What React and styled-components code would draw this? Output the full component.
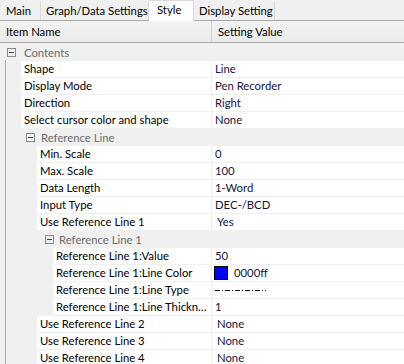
import React from 'react';
import styled, { createGlobalStyle } from 'styled-components';

const GlobalStyle = createGlobalStyle`
  html, body {
    margin: 0;
    padding: 0;
    background: #f0f0f0;
  }
  body {
    font-family: Lato, "Noto Sans", sans-serif;
    font-size: 11.3px;
    color: #000;
    overflow: hidden;
  }
`;

const Window = styled.div`
  width: 404px;
  height: 364px;
  display: flex;
  flex-direction: column;
  background: #f0f0f0;
  overflow: hidden;
`;

const TabBar = styled.div`
  display: flex;
  align-items: flex-end;
  height: 20px;
  border-bottom: 1px solid #a9a9a9;
  background: #f0f0f0;
`;

const Tab = styled.div`
  height: ${(p) => (p.active ? '21px' : '19px')};
  margin-bottom: ${(p) => (p.active ? '-1px' : '0')};
  width: ${(p) => p.w}px;
  box-sizing: border-box;
  padding-left: ${(p) => p.pad}px;
  line-height: ${(p) => (p.active ? '17px' : '19px')};
  background: ${(p) => (p.active ? '#fff' : '#f0f0f0')};
  border-right: 1px solid #d9d9d9;
  border-top: ${(p) => (p.active ? '1px solid #d9d9d9' : 'none')};
  white-space: nowrap;
  overflow: hidden;
`;

const Header = styled.div`
  display: grid;
  grid-template-columns: 212px 1fr;
  height: 21px;
  border-bottom: 1px solid #a9a9a9;
  background: linear-gradient(#f3f3f3, #ebebeb);
  line-height: 21px;
`;

const HeaderCell = styled.div`
  padding-left: 6px;
  border-right: ${(p) => (p.last ? 'none' : '1px solid #d0d0d0')};
`;

const Body = styled.div`
  position: relative;
  flex: 1;
  padding-top: 1px;
`;

const Rail = styled.div`
  position: absolute;
  left: 5px;
  top: 17px;
  bottom: 0;
  width: 1px;
  background: #a9a9a9;
`;

const Row = styled.div`
  display: grid;
  grid-template-columns: 212px 1fr;
  height: 16px;
  margin-bottom: 1px;
  line-height: 16px;
`;

const Category = styled.div`
  display: flex;
  align-items: center;
  height: 16px;
  margin-bottom: 1px;
  padding-left: ${(p) => p.box}px;
  color: #6d6d6d;
`;

const Toggle = styled.span`
  position: relative;
  width: 7px;
  height: 7px;
  border: 1px solid #8a8a8a;
  margin-right: ${(p) => p.gap}px;
  &::after {
    content: '';
    position: absolute;
    left: 1px;
    right: 1px;
    top: 3px;
    height: 1px;
    background: #444;
  }
`;

const Label = styled.div`
  margin-left: ${(p) => p.indent}px;
  margin-right: 1px;
  background: #fff;
  padding-left: 3px;
  white-space: nowrap;
  overflow: hidden;
  text-overflow: ellipsis;
`;

const Value = styled.div`
  background: #fff;
  padding-left: ${(p) => (p.inset ? 5 : 3)}px;
  display: flex;
  align-items: center;
  white-space: nowrap;
  color: #14143c;
`;

const Swatch = styled.span`
  width: 12px;
  height: 12px;
  background: #0000ff;
  border: 1px solid #000;
  margin-left: -1px;
  margin-right: 6px;
`;

const LineType = () => (
  <svg width="52" height="4" viewBox="0 0 52 4" shapeRendering="crispEdges">
    <path
      d="M0 2.5h5M7 2.5h1M10 2.5h5M17 2.5h1M20 2.5h5M27 2.5h1M30 2.5h5M37 2.5h1M40 2.5h5M47 2.5h1M50 2.5h1"
      stroke="#000"
      strokeWidth="1"
    />
  </svg>
);

const tabs = [
  { name: 'Main', w: 41, pad: 6 },
  { name: 'Graph/Data Settings', w: 108, pad: 5 },
  { name: 'Style', w: 45, pad: 8, active: true },
  { name: 'Display Setting', w: 81, pad: 5 },
];

const levelIndent = { 1: 21, 2: 37, 3: 53 };
const catBox = { 0: [7, 8], 1: [26, 6], 2: [45, 5] };

const rows = [
  { cat: 'Contents', d: 0 },
  { label: 'Shape', value: 'Line', d: 1 },
  { label: 'Display Mode', value: 'Pen Recorder', d: 1 },
  { label: 'Direction', value: 'Right', d: 1 },
  { label: 'Select cursor color and shape', value: 'None', d: 1 },
  { cat: 'Reference Line', d: 1 },
  { label: 'Min. Scale', value: '0', d: 2 },
  { label: 'Max. Scale', value: '100', d: 2 },
  { label: 'Data Length', value: '1-Word', d: 2 },
  { label: 'Input Type', value: 'DEC-/BCD', d: 2 },
  { label: 'Use Reference Line 1', value: 'Yes', d: 2, inset: true },
  { cat: 'Reference Line 1', d: 2 },
  { label: 'Reference Line 1:Value', value: '50', d: 3 },
  { label: 'Reference Line 1:Line Color', value: '0000ff', d: 3, swatch: true },
  { label: 'Reference Line 1:Line Type', d: 3, line: true },
  { label: 'Reference Line 1:Line Thickness', value: '1', d: 3 },
  { label: 'Use Reference Line 2', value: 'None', d: 2, inset: true },
  { label: 'Use Reference Line 3', value: 'None', d: 2, inset: true },
  { label: 'Use Reference Line 4', value: 'None', d: 2, inset: true },
];

export default function App() {
  return (
    <Window>
      <GlobalStyle />
      <TabBar>
        {tabs.map((t) => (
          <Tab key={t.name} w={t.w} pad={t.pad} active={t.active}>
            {t.name}
          </Tab>
        ))}
      </TabBar>
      <Header>
        <HeaderCell>Item Name</HeaderCell>
        <HeaderCell last>Setting Value</HeaderCell>
      </Header>
      <Body>
        <Rail />
        {rows.map((r) =>
          r.cat ? (
            <Category key={r.cat} box={catBox[r.d][0]}>
              <Toggle gap={catBox[r.d][1]} />
              {r.cat}
            </Category>
          ) : (
            <Row key={r.label}>
              <Label indent={levelIndent[r.d]}>{r.label}</Label>
              <Value inset={r.inset}>
                {r.swatch && <Swatch />}
                {r.line ? <LineType /> : r.value}
              </Value>
            </Row>
          )
        )}
      </Body>
    </Window>
  );
}
